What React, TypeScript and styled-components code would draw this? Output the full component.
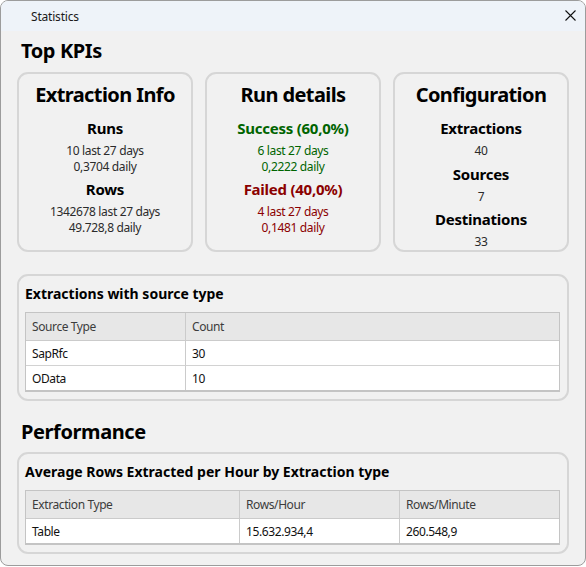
import React from "react";
import styled, { createGlobalStyle } from "styled-components";

const GlobalStyle = createGlobalStyle`
  html, body { margin: 0; padding: 0; background: #ffffff; }
  body { font-family: "Noto Sans", "Segoe UI", sans-serif; }
  * { box-sizing: border-box; }
`;

const FONT = `"Noto Sans", "Segoe UI", sans-serif`;

const Window = styled.div`
  width: 586px;
  height: 566px;
  border: 1px solid #9c9c9c;
  border-radius: 8px;
  background: #f1f1f1;
  overflow: hidden;
  display: flex;
  flex-direction: column;
  font-family: ${FONT};
  color: #000;
`;

const TitleBar = styled.div`
  height: 30px;
  flex: none;
  background: #eef3f9;
  display: flex;
  align-items: center;
  justify-content: space-between;
  padding: 0 9px 0 30px;
`;

const TitleText = styled.span`
  font-size: 12px;
  letter-spacing: -0.2px;
  color: #1a1a1a;
`;

const CloseButton = styled.div`
  width: 12px;
  height: 12px;
  margin-top: -1px;
  display: flex;
  align-items: center;
  justify-content: center;
`;

const Content = styled.div`
  padding: 6px 16px 0 16px;
  display: flex;
  flex-direction: column;
`;

const SectionHeading = styled.h2<{ $top?: number }>`
  margin: ${(p) => p.$top ?? 0}px 0 0 4px;
  font-size: 20px;
  line-height: 27px;
  font-weight: 700;
  letter-spacing: -0.4px;
`;

const CardRow = styled.div`
  margin-top: 8px;
  display: grid;
  grid-template-columns: repeat(3, 176px);
  column-gap: 12px;
`;

const Card = styled.div`
  height: 180px;
  border: 2px solid #d6d6d6;
  border-radius: 11px;
  padding-top: 9px;
  display: flex;
  flex-direction: column;
  align-items: center;
  text-align: center;
`;

const CardTitle = styled.div`
  font-size: 20px;
  line-height: 24px;
  font-weight: 700;
  letter-spacing: -0.6px;
  margin-bottom: 6px;
`;

const Metric = styled.div<{ $color?: string }>`
  margin-top: 5px;
  font-size: 15px;
  line-height: 20px;
  font-weight: 700;
  letter-spacing: -0.25px;
  color: ${(p) => p.$color ?? "#000"};
`;

const Detail = styled.div<{ $color?: string }>`
  margin-top: 5px;
  font-size: 12px;
  line-height: 15.5px;
  letter-spacing: -0.35px;
  color: ${(p) => p.$color ?? "#2b2b2b"};
`;

const Panel = styled.div<{ $top: number }>`
  margin-top: ${(p) => p.$top}px;
  border: 2px solid #d6d6d6;
  border-radius: 11px;
  padding: 8px 7px 7px 6px;
`;

const PanelTitle = styled.div`
  font-size: 14px;
  line-height: 20px;
  font-weight: 700;
  margin-bottom: 8px;
`;

const Table = styled.div<{ $cols: string }>`
  display: grid;
  grid-template-columns: ${(p) => p.$cols};
  border: 1px solid #c4c4c4;
  border-bottom-width: 2px;
  background: #ffffff;
`;

const HeadCell = styled.div<{ $last?: boolean }>`
  height: 28px;
  background: #e7e7e7;
  border-bottom: 1px solid #cbcbcb;
  border-right: ${(p) => (p.$last ? "none" : "1px solid #cbcbcb")};
  padding: 0 6px;
  display: flex;
  align-items: center;
  font-size: 12px;
  letter-spacing: -0.4px;
  color: #3c3c3c;
`;

const Cell = styled.div<{ $last?: boolean; $lastRow?: boolean }>`
  height: ${(p) => (p.$lastRow ? 24 : 25)}px;
  border-bottom: ${(p) => (p.$lastRow ? "none" : "1px solid #d2d2d2")};
  border-right: ${(p) => (p.$last ? "none" : "1px solid #cbcbcb")};
  padding: 0 6px;
  display: flex;
  align-items: center;
  font-size: 12px;
  letter-spacing: -0.4px;
  color: #111;
`;

type TableProps = { cols: string; head: string[]; rows: string[][] };

const DataTable: React.FC<TableProps> = ({ cols, head, rows }) => (
  <Table $cols={cols}>
    {head.map((h, i) => (
      <HeadCell key={h} $last={i === head.length - 1}>
        {h}
      </HeadCell>
    ))}
    {rows.map((r, ri) =>
      r.map((c, ci) => (
        <Cell
          key={`${ri}-${ci}`}
          $last={ci === r.length - 1}
          $lastRow={ri === rows.length - 1}
        >
          {c}
        </Cell>
      ))
    )}
  </Table>
);

const GREEN = "#006400";
const RED = "#8b0000";

export default function App() {
  return (
    <>
      <GlobalStyle />
      <Window>
        <TitleBar>
          <TitleText>Statistics</TitleText>
          <CloseButton>
            <svg width="11" height="11" viewBox="0 0 11 11">
              <path d="M0.5 0.5 L10.5 10.5 M10.5 0.5 L0.5 10.5" stroke="#111" strokeWidth="1.1" />
            </svg>
          </CloseButton>
        </TitleBar>
        <Content>
          <SectionHeading>Top KPIs</SectionHeading>
          <CardRow>
            <Card>
              <CardTitle>Extraction Info</CardTitle>
              <Metric>Runs</Metric>
              <Detail>
                10 last 27 days
                <br />
                0,3704 daily
              </Detail>
              <Metric>Rows</Metric>
              <Detail>
                1342678 last 27 days
                <br />
                49.728,8 daily
              </Detail>
            </Card>
            <Card>
              <CardTitle>Run details</CardTitle>
              <Metric $color={GREEN}>Success (60,0%)</Metric>
              <Detail $color={GREEN}>
                6 last 27 days
                <br />
                0,2222 daily
              </Detail>
              <Metric $color={RED}>Failed (40,0%)</Metric>
              <Detail $color={RED}>
                4 last 27 days
                <br />
                0,1481 daily
              </Detail>
            </Card>
            <Card>
              <CardTitle>Configuration</CardTitle>
              <Metric>Extractions</Metric>
              <Detail>40</Detail>
              <Metric>Sources</Metric>
              <Detail>7</Detail>
              <Metric>Destinations</Metric>
              <Detail>33</Detail>
            </Card>
          </CardRow>
          <Panel $top={22}>
            <PanelTitle>Extractions with source type</PanelTitle>
            <DataTable
              cols="160px 1fr"
              head={["Source Type", "Count"]}
              rows={[
                ["SapRfc", "30"],
                ["OData", "10"],
              ]}
            />
          </Panel>
          <SectionHeading $top={17}>Performance</SectionHeading>
          <Panel $top={7}>
            <PanelTitle>Average Rows Extracted per Hour by Extraction type</PanelTitle>
            <DataTable
              cols="214px 160px 1fr"
              head={["Extraction Type", "Rows/Hour", "Rows/Minute"]}
              rows={[["Table", "15.632.934,4", "260.548,9"]]}
            />
          </Panel>
        </Content>
      </Window>
    </>
  );
}
